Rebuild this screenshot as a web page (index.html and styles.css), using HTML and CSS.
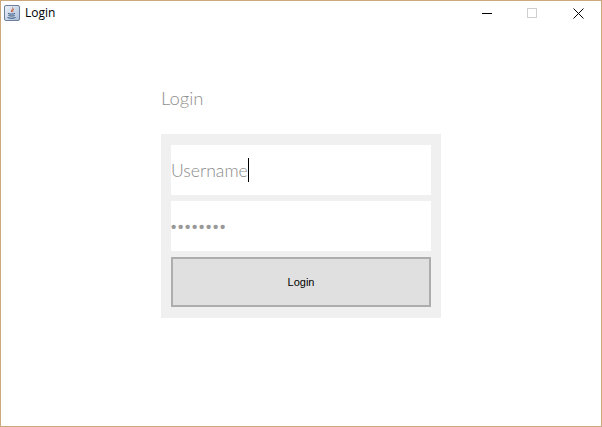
FILE: index.html
```html
<!DOCTYPE html>
<html lang="en">
<head>
<meta charset="utf-8">
<title>Login</title>
<link rel="stylesheet" href="styles.css">
</head>
<body>
<div class="window">
  <header class="titlebar">
    <svg class="app-icon" width="16" height="16" viewBox="0 0 16 16">
      <defs><linearGradient id="g" x1="0" y1="0" x2="1" y2="1"><stop offset="0" stop-color="#eef3fa"/><stop offset="1" stop-color="#a9bdd8"/></linearGradient></defs>
      <rect x="0.5" y="0.5" width="15" height="15" rx="1.500" fill="url(#g)" stroke="#6c7f9c"/>
      <path d="M8.500 2.500c1.500 1.500-2 2.500-1 4.500M10 4c-1 1-2 1.500-1 3" fill="none" stroke="#c9562f" stroke-width="1"/>
      <path d="M4 8.500c2 .8 5 .8 7 0M4.500 10.500c2 .7 4.500 .7 6 0M3.500 12.500c2.500 1 6 1 8 0" fill="none" stroke="#33527c" stroke-width="1"/>
    </svg>
    <span class="title">Login</span>
    <div class="controls">
      <svg width="10" height="10" viewBox="0 0 10 10"><path d="M0 5.500h10" stroke="#000"/></svg>
      <svg width="10" height="10" viewBox="0 0 10 10"><rect x="0.500" y="0.500" width="9" height="9" fill="none" stroke="#cfcfcf"/></svg>
      <svg class="close" width="11" height="11" viewBox="0 0 11 11"><path d="M.5 .5l10 10M10.500 .5l-10 10" stroke="#000" fill="none"/></svg>
    </div>
  </header>
  <main class="content">
    <h1 class="heading">Login</h1>
    <form class="panel">
      <div class="field"><span class="placeholder">Username</span><span class="caret"></span></div>
      <div class="field"><span class="dots">••••••••</span></div>
      <div class="button"><span class="button-label">Login</span></div>
    </form>
  </main>
</div>
</body>
</html>
```
FILE: styles.css
```css
* { box-sizing: border-box; }
html, body { margin: 0; padding: 0; }
body { background: #fff; font-family: "Liberation Sans", "Open Sans", sans-serif; }
.window {
  width: 602px;
  height: 427px;
  border: 1px solid #cba97c;
  background: #fff;
  display: flex;
  flex-direction: column;
  overflow: hidden;
}
.titlebar {
  height: 24px;
  flex: none;
  display: flex;
  align-items: center;
  padding-left: 3px;
}
.app-icon { flex: none; }
.title {
  margin-left: 5px;
  margin-bottom: 2px;
  font-family: "Open Sans", sans-serif;
  font-size: 12px;
  color: #000;
}
.controls {
  margin-left: auto;
  display: flex;
  align-items: center;
  gap: 35px;
  padding-right: 17px;
}
.close { margin-left: 1px; }
.content {
  flex: 1;
  padding: 59px 0 0 160px;
}
.heading {
  margin: 0;
  height: 31px;
  line-height: 29px;
  font-family: "Lato", sans-serif;
  font-size: 18.500px;
  font-weight: 300;
  color: #8f8f8f;
}
.panel {
  margin-top: 19px;
  width: 280px;
  height: 184px;
  background: #f0f0f0;
  padding: 11px 10px;
  display: flex;
  flex-direction: column;
  gap: 6px;
}
.field {
  height: 50px;
  background: #fff;
  display: flex;
  align-items: center;
  flex: none;
}
.placeholder {
  font-family: "Lato", sans-serif;
  font-size: 17.600px;
  font-weight: 300;
  color: #8a8a8a;
}
.caret { width: 1px; height: 24px; background: #000; }
.dots {
  font-family: "Liberation Sans", sans-serif;
  font-size: 15px;
  font-weight: bold;
  letter-spacing: 1.750px;
  color: #999;
}
.button {
  height: 50px;
  flex: none;
  background: #e0e0e0;
  border: 2px solid #adadad;
  display: flex;
  align-items: center;
  justify-content: center;
  font-size: 11px;
  color: #000;
}
```
